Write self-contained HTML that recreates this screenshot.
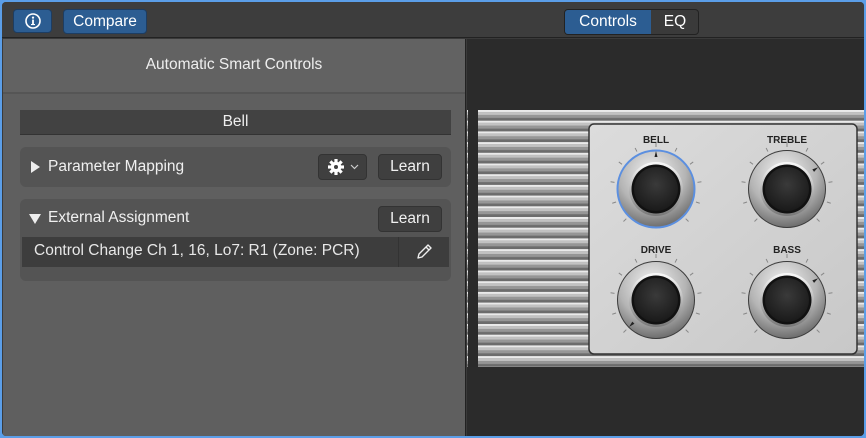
<!DOCTYPE html>
<html><head><meta charset="utf-8"><style>
*{margin:0;padding:0;box-sizing:border-box}
body{width:866px;height:438px;overflow:hidden;background:#5b9ee8;font-family:"Liberation Sans",sans-serif;position:relative}
#win{position:absolute;left:2px;top:2px;width:862px;height:434px;background:#3a3a3a;border-radius:4px;overflow:hidden}
.top{position:absolute;left:0;top:0;width:862px;height:36px;background:#3d3d3d;border-bottom:1px solid #222}
.btn{position:absolute;border-radius:4px;color:#fff;font-size:15.5px;text-align:center}
.blue{background:#2c5d92;border:1px solid #1d3d62}
.left{position:absolute;left:1px;top:37px;width:463px;height:397px;background:#5f5f5f;border-right:1px solid #222}
.hdr{height:55px;background:#626262;border-bottom:2px solid #555;color:#eee;font-size:15.5px;text-align:center;line-height:52px}
.right{position:absolute;left:465px;top:37px;width:397px;height:397px;background:#2b2b2b}
.box{position:absolute;left:17px;width:431px;background:#545454;border-radius:6px}
.lbtn{position:absolute;background:#3f3f3f;border:1px solid #333;border-radius:4px;color:#f0f0f0;font-size:15.5px;text-align:center;line-height:24px}
.t{position:absolute;color:#f0f0f0;font-size:15.5px}
</style></head><body><div id="win">
<div class="top">
 <div class="btn blue" style="left:11px;top:7px;width:39px;height:24px"><svg width="39" height="22" viewBox="0 0 39 22"><circle cx="19" cy="11" r="7" fill="none" stroke="#fff" stroke-width="1.6"/><circle cx="19" cy="7.6" r="1.1" fill="#fff"/><rect x="18.1" y="9.6" width="1.8" height="4.8" fill="#fff"/><rect x="17" y="14" width="4" height="1.1" fill="#fff"/></svg></div>
 <div class="btn blue" style="left:61px;top:7px;width:84px;height:25px;line-height:23px">Compare</div>
 <div style="position:absolute;left:562px;top:7px;width:135px;height:26px;border:1px solid #222;border-radius:4px;background:#3a3a3a;overflow:hidden">
  <div style="position:absolute;left:0;top:0;width:86px;height:24px;background:#2c5d92;color:#fff;font-size:15.5px;text-align:center;line-height:24px">Controls</div>
  <div style="position:absolute;left:86px;top:0;width:48px;height:24px;color:#fff;font-size:15.5px;text-align:center;line-height:24px">EQ</div>
 </div>
</div>
<div class="left">
 <div class="hdr">Automatic Smart Controls</div>
 <div style="position:absolute;left:17px;top:71px;width:431px;height:25px;background:#424242;border-bottom:1px solid #333;color:#eee;font-size:15.5px;text-align:center;line-height:24px">Bell</div>
 <div class="box" style="top:108px;height:40px">
  <svg style="position:absolute;left:11px;top:14px" width="10" height="12"><path d="M0 0L9 6L0 12Z" fill="#eee"/></svg>
  <div class="t" style="left:28px;top:11px">Parameter Mapping</div>
  <div class="lbtn" style="left:298px;top:7px;width:49px;height:26px"><svg width="47" height="24" viewBox="0 0 47 24"><g transform="translate(17,12)" fill="#fff"><circle r="5.3"/><g><rect x="-1.6" y="-8" width="3.2" height="16"/><rect x="-1.6" y="-8" width="3.2" height="16" transform="rotate(45)"/><rect x="-1.6" y="-8" width="3.2" height="16" transform="rotate(90)"/><rect x="-1.6" y="-8" width="3.2" height="16" transform="rotate(135)"/></g><circle r="2" fill="#3f3f3f"/></g><path d="M32 10l3.5 3.5L39 10" stroke="#ccc" stroke-width="1.2" fill="none"/></svg></div>
  <div class="lbtn" style="left:358px;top:7px;width:64px;height:26px">Learn</div>
 </div>
 <div class="box" style="top:160px;height:82px">
  <svg style="position:absolute;left:9px;top:15px" width="13" height="10"><path d="M0 0L12 0L6 10Z" fill="#eee"/></svg>
  <div class="t" style="left:28px;top:10px">External Assignment</div>
  <div class="lbtn" style="left:358px;top:7px;width:64px;height:26px">Learn</div>
  <div style="position:absolute;left:2px;top:38px;width:427px;height:30px;background:#3d3d3d">
   <div class="t" style="left:12px;top:5px;color:#e8e8e8">Control Change Ch 1, 16, Lo7: R1 (Zone: PCR)</div>
   <div style="position:absolute;left:376px;top:0;width:1px;height:30px;background:#333"></div>
   <svg style="position:absolute;left:393px;top:6px" width="18" height="18"><path d="M3 15l1-4 9-9 3 3-9 9z M11 4l3 3" stroke="#eee" stroke-width="1.4" fill="none" stroke-linejoin="round"/></svg>
  </div>
 </div>
</div>
<div class="right">
<svg width="397" height="397" viewBox="465 37 397 397" style="position:absolute;left:0;top:0">
<defs>
<pattern id="rib" x="0" y="108" width="10" height="10.7" patternUnits="userSpaceOnUse"><rect width="10" height="10.7" fill="#7c7c7c"/><rect y="0" width="10" height="2" fill="#eaeaea"/><rect y="2" width="10" height="3" fill="#c2c2c2"/><rect y="5" width="10" height="3" fill="#969696"/><rect y="8" width="10" height="2.7" fill="#6c6c6c"/></pattern>
<linearGradient id="plate" x1="0" y1="0" x2="1" y2="1"><stop offset="0" stop-color="#dcdcdc"/><stop offset="1" stop-color="#c8c8c8"/></linearGradient>
<radialGradient id="ring" cx="0.45" cy="0.3" r="0.8"><stop offset="0" stop-color="#f4f4f4"/><stop offset="0.55" stop-color="#b4b4b4"/><stop offset="1" stop-color="#555"/></radialGradient>
<linearGradient id="bez" x1="0" y1="0" x2="0" y2="1"><stop offset="0" stop-color="#fafafa"/><stop offset="1" stop-color="#777"/></linearGradient>
<radialGradient id="cap" cx="0.5" cy="0.4" r="0.6"><stop offset="0" stop-color="#3a3a3a"/><stop offset="1" stop-color="#1a1a1a"/></radialGradient>
<g id="ticks" stroke="#888" stroke-width="1">
<line x1="0" y1="-42" x2="0" y2="-46" transform="rotate(-135)"/><line x1="0" y1="-42" x2="0" y2="-46" transform="rotate(-108)"/><line x1="0" y1="-42" x2="0" y2="-46" transform="rotate(-81)"/><line x1="0" y1="-42" x2="0" y2="-46" transform="rotate(-54)"/><line x1="0" y1="-42" x2="0" y2="-46" transform="rotate(-27)"/><line x1="0" y1="-42" x2="0" y2="-46"/><line x1="0" y1="-42" x2="0" y2="-46" transform="rotate(27)"/><line x1="0" y1="-42" x2="0" y2="-46" transform="rotate(54)"/><line x1="0" y1="-42" x2="0" y2="-46" transform="rotate(81)"/><line x1="0" y1="-42" x2="0" y2="-46" transform="rotate(108)"/><line x1="0" y1="-42" x2="0" y2="-46" transform="rotate(135)"/>
</g>
<g id="knob"><use href="#ticks"/><circle r="39" fill="#3a3a3a"/><circle r="38" fill="url(#ring)"/><circle r="27" fill="url(#bez)"/><circle r="24.5" fill="#111"/><circle r="22" fill="url(#cap)"/></g>
</defs>
<rect x="465" y="108" width="397" height="257" fill="url(#rib)"/>
<rect x="466" y="108" width="10" height="257" fill="#2a2a2a"/>
<rect x="587" y="122" width="268" height="230" rx="5" fill="url(#plate)" stroke="#333" stroke-width="1.5"/>
<g font-family="Liberation Sans,sans-serif" font-size="10" font-weight="bold" fill="#222" text-anchor="middle">
<text x="654" y="141">BELL</text><text x="785" y="141">TREBLE</text><text x="654" y="251">DRIVE</text><text x="785" y="251">BASS</text></g>
<g transform="translate(654,187)"><use href="#knob"/><circle r="38.5" fill="none" stroke="#5b8fe0" stroke-width="2"/><path d="M-1.5 -32L0 -38L1.5 -32Z" fill="#222"/></g>
<g transform="translate(785,187)"><use href="#knob"/><path d="M-1.5 -32L0 -38L1.5 -32Z" fill="#222" transform="rotate(55)"/></g>
<g transform="translate(654,298)"><use href="#knob"/><path d="M-1.5 -32L0 -38L1.5 -32Z" fill="#222" transform="rotate(-135)"/></g>
<g transform="translate(785,298)"><use href="#knob"/><path d="M-1.5 -32L0 -38L1.5 -32Z" fill="#222" transform="rotate(55)"/></g>
</svg>
</div>
</div></body></html>
